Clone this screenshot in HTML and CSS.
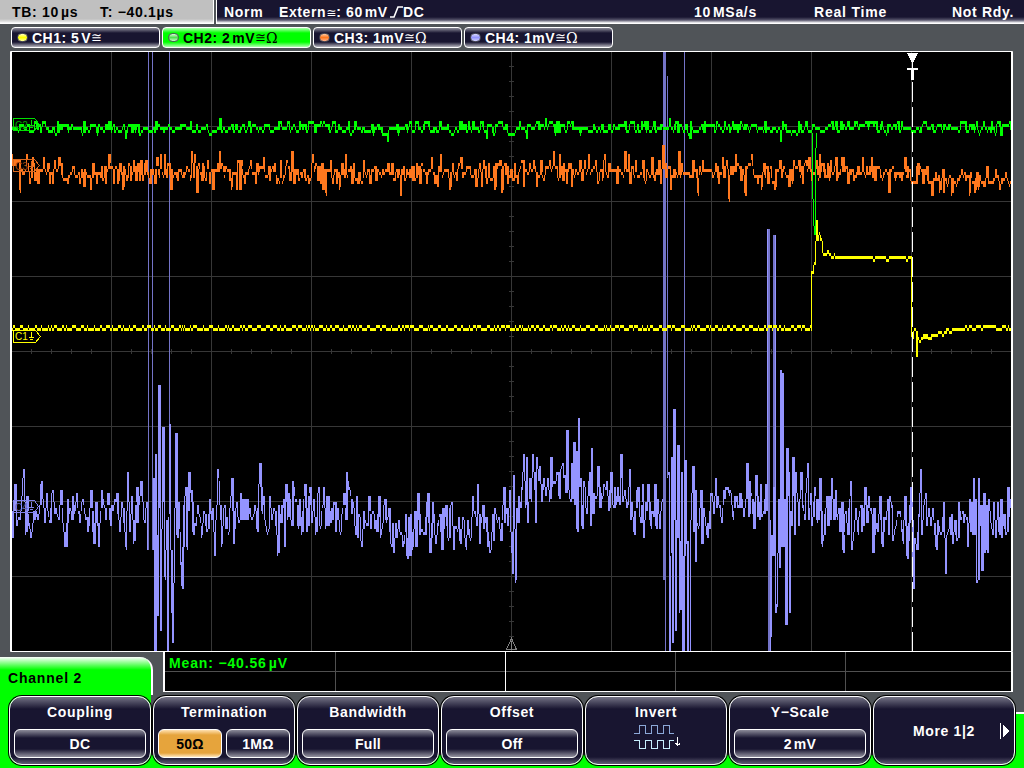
FILE: index.html
```html
<!DOCTYPE html>
<html lang="en">
<head>
    <meta charset="UTF-8">
    <meta name="viewport" content="width=device-width, initial-scale=1.0">
    <title>Oscilloscope</title>
    <link rel="stylesheet" href="styles.css">
</head>
<body>
    <header class="status-bar">
        <div class="timebase">
            <span class="tb">TB: 10<i class="thin"></i>µs</span>
            <span>T: −40.1µs</span>
        </div>
        <div class="trigger">
            <span class="mode">Norm</span>
            <span class="source">Extern<i class="sym">≅</i>: 60<i class="thin"></i>mV</span>
            <svg class="edge" width="13" height="12"><path d="M0 11h4L8 1h5" /></svg>
            <span class="coupling">DC</span>
            <span class="rate">10<i class="thin"></i>MSa/s</span>
            <span class="acq">Real Time</span>
            <span class="state">Not Rdy.</span>
        </div>
    </header>

    <nav class="channels">
        <div class="channel ch1"><i class="led"></i><span>CH1: 5<i class="thin"></i>V</span><i class="sym">≅</i></div>
        <div class="channel ch2 active"><i class="led"></i><span>CH2: 2<i class="thin"></i>mV</span><i class="sym">≅</i><i class="ohm">Ω</i></div>
        <div class="channel ch3"><i class="led"></i><span>CH3: 1mV</span><i class="sym">≅</i><i class="ohm">Ω</i></div>
        <div class="channel ch4"><i class="led"></i><span>CH4: 1mV</span><i class="sym">≅</i><i class="ohm">Ω</i></div>
    </nav>

    <main class="screen">
        <svg id="scope" width="999" height="599" viewBox="12 52 999 599" shape-rendering="crispEdges">
            <path id="grid" />
            <path id="trace4" />
            <path id="spikes4" />
            <path id="trace3" />
            <path id="trace2" />
            <path id="trace1" />
            <g class="markers">
                <path class="m4" d="M13.5 500.5h21l4 6-4 6h-21z" />
                <path class="m3" d="M13.5 159.5h21l5 6-5 6h-21z" />
                <path class="m2" d="M13.5 118.5h21l5 6-5 6h-21z" />
                <path class="m1" d="M13.5 330.5h22l5 6-5 6h-22z" />
                <text class="m4t" x="15" y="511">C4</text>
                <text class="m3t" x="15" y="170">C3</text>
                <text class="m2t" x="15" y="129">C2</text>
                <text class="m1t" x="15" y="340">C1</text>
                <path class="m4" d="M31.500 502v5M29 507.500h5M30 509.500h3" />
                <path class="m3" d="M31.500 161v5M29 166.500h5M30 168.500h3" />
                <path class="m2" d="M31.500 120v5M29 125.500h5M30 127.500h3" />
                <path class="m1" d="M31.500 332v5M29 337.500h5M30 339.500h3" />
            </g>
            <path class="ref" d="M511.500 638.500l-5 11h10zM511.500 641v8" />
            <path class="cursor" d="M912.500 82V651" />
            <path class="flag" d="M907 53h11l-5 10h-1zM907 68h11v2h-4v10h-3v-10h-4zM912 63h1v5h-1z" />
        </svg>
    </main>

    <section class="lower">
        <h2 class="menu-title">Channel 2</h2>
        <div class="results">
            <div class="cell mean">Mean: −40.56<i class="thin"></i>µV</div>
            <div class="cell white"></div>
            <div class="cell"></div>
            <div class="cell"></div>
            <div class="cell last"></div>
        </div>
    </section>

    <footer class="menu">
        <div class="softkey"><span>Coupling</span><div class="values"><b>DC</b></div></div>
        <div class="softkey"><span>Termination</span><div class="values"><b class="on">50Ω</b><b>1MΩ</b></div></div>
        <div class="softkey"><span>Bandwidth</span><div class="values"><b>Full</b></div></div>
        <div class="softkey"><span>Offset</span><div class="values"><b>Off</b></div></div>
        <div class="softkey">
            <span>Invert</span>
            <svg class="wave" width="48" height="26" shape-rendering="crispEdges">
                <path class="up" d="M0 8.500h5.500v-8h6v8h6v-8h6v8h6v-8h6v8h4" />
                <path class="down" d="M0 15.500h5.500v8h6v-8h6v8h6v-8h6v8h6v-8h4" />
                <path class="arrow" d="M43.500 12v9M41 18.500h1v1h3v-1h1" />
            </svg>
        </div>
        <div class="softkey"><span>Y−Scale</span><div class="values"><b>2<i class="thin"></i>mV</b></div></div>
        <div class="softkey more">
            <span>More 1|2</span>
            <svg width="10" height="16" shape-rendering="crispEdges"><path d="M0 0h1v16H0zM3 2l6 6-6 6z" /></svg>
        </div>
    </footer>

    <script src="script.js"></script>
</body>
</html>
```

FILE: styles.css
```css
body {
    font-family: "Liberation Sans", Arial, sans-serif;
    font-size: 14px;
    font-weight: bold;
    letter-spacing: 0.7px;
    color: #fff;
    background-color: #505458;
    width: 1024px;
    height: 768px;
    margin: 0;
    overflow: hidden;
    display: flex;
    flex-direction: column;
}

* {
    box-sizing: border-box;
}

i {
    font-style: normal;
}

span, b {
    white-space: pre;
}

.thin {
    display: inline-block;
    width: 2px;
}

.sym, .ohm {
    font-family: "DejaVu Sans", sans-serif;
    font-weight: normal;
    font-size: 12px;
    letter-spacing: 0;
}

.channel .sym {
    font-size: 13px;
}

.ohm {
    font-family: "DejaVu Serif", serif;
    font-size: 14px;
}

/* status line */
.status-bar {
    display: flex;
    height: 24px;
    gap: 2px;
    flex: none;
    line-height: 24px;
}

.timebase {
    width: 214px;
    padding-left: 12px;
    display: flex;
    color: #000;
    background: linear-gradient(#c0c0c0 19px, #e8e8e8 22px, #fff 23px);
    border-right: 1px solid #fff;
}

.tb {
    width: 88px;
}

.trigger {
    flex: 1;
    display: flex;
    background: linear-gradient(#181530 17px, #55536a 20px, #fff 23px);
    border-left: 1px solid #fff;
    padding-left: 7px;
}

.mode {
    width: 55px;
}

.source {
    width: 111px;
    letter-spacing: 0.6px;
}

.edge {
    margin-top: 6px;
    fill: none;
    stroke: #fff;
    stroke-width: 1.6;
}

.coupling {
    width: 291px;
}

.rate {
    width: 120px;
    letter-spacing: 0.7px;
}

.acq {
    width: 138px;
    letter-spacing: 0.8px;
}

/* channel tabs */
.channels {
    display: flex;
    gap: 2px;
    height: 27px;
    padding: 3px 0 0 11px;
    flex: none;
}

.channel {
    width: 149px;
    height: 21px;
    display: flex;
    align-items: center;
    padding-left: 5px;
    border: 1px solid #fff;
    border-radius: 4px;
    background: linear-gradient(#8c8b99, #181530 5px, #181530 14px, #b5b4be 19px);
}

.channel span {
    letter-spacing: 0.5px;
}

.active {
    color: #000;
    background: linear-gradient(#b0ffb0, #00ff00 5px, #00ff00 14px, #b0ffb0 19px);
}

.led {
    width: 11px;
    height: 9px;
    border-radius: 5px;
    border: 1px solid #50505c;
    margin-right: 4px;
}

.ch1 .led {
    background: linear-gradient(#ffffc0, #ffff00 50%, #ffffa0);
}

.ch2 .led {
    background: linear-gradient(#d8ffd8, #50e050 50%, #c8ffc8);
}

.ch3 .led {
    background: linear-gradient(#ffc8a0, #ff7820 50%, #ffb088);
}

.ch4 .led {
    background: linear-gradient(#d8d8ff, #9494ff 50%, #d0d0ff);
}

/* waveform display */
.screen {
    flex: none;
    margin-left: 10px;
    width: 1003px;
    height: 601px;
    background-color: #000;
    border: solid #fff;
    border-width: 1px 2px;
    border-radius: 1px;
}

.screen svg {
    display: block;
}

#grid {
    fill: #373737;
}

#trace1 {
    fill: #ffff00;
}

#trace2 {
    fill: #00ff00;
}

#trace3 {
    fill: #ff781e;
}

#trace4 {
    fill: #9494ff;
}

#spikes4 {
    fill: #7474c8;
}

.markers path {
    fill: none;
}

.markers text {
    font-size: 10px;
    font-weight: normal;
    letter-spacing: 0;
}

.m1 { stroke: #ffff00; }
.m2 { stroke: #00e000; }
.m3 { stroke: #d86820; }
.m4 { stroke: #8080e8; }
.m1t { fill: #ffff00; }
.m2t { fill: #00a000; }
.m3t { fill: #a04810; }
.m4t { fill: #6060b0; }

.ref {
    fill: none;
    stroke: #808080;
}

.cursor {
    stroke: #fff;
    stroke-dasharray: 20 5;
}

.flag {
    fill: #fff;
}

/* measurement results next to the menu title */
.lower {
    display: flex;
    height: 43px;
    flex: none;
}

.menu-title {
    width: 153px;
    height: 38px;
    margin: 5px 10px 0 0;
    padding: 12px 0 0 8px;
    font-size: 14px;
    line-height: 18px;
    letter-spacing: 0.8px;
    color: #000;
    background: linear-gradient(#fff, #00ff00 13px);
    border-right: 2px solid #fff;
    border-radius: 0 13px 0 0;
}

.results {
    width: 850px;
    height: 40px;
    display: grid;
    grid-template-columns: 171px 170px 170px 170px 165px;
    background: linear-gradient(transparent 19px, #505050 19px, #505050 20px, transparent 20px) #000;
    border: solid #fff;
    border-width: 0 2px 1px;
}

.cell {
    border-right: 1px solid #505050;
}

.cell.white {
    border-color: #fff;
}

.cell.last {
    border: 0;
}

.mean {
    color: #00ff00;
    padding-left: 4px;
    line-height: 22px;
    letter-spacing: 0.85px;
    white-space: nowrap;
}

/* softkeys */
.menu {
    flex: 1;
    display: flex;
    gap: 2px;
    padding: 1px 0 0 9px;
    background:
        linear-gradient(#00ff00, #00ff00) 0 0 / 151px 73px no-repeat,
        linear-gradient(#00ff00, #00ff00) 0 60px / 1024px 13px no-repeat,
        linear-gradient(#fff 2px, #00ff00 2px) 1007px 17px / 17px 56px no-repeat;
}

.softkey {
    width: 142px;
    height: 69px;
    padding: 7px 4px 0;
    border: 1px solid #fff;
    border-radius: 13px;
    box-shadow: 0 0 0 1px #000;
    background: linear-gradient(#747385, #181530 12px, #181530 60px, #625f76);
    text-align: center;
}

.softkey > span {
    display: block;
    line-height: 16px;
    letter-spacing: 0.65px;
}

.values {
    display: flex;
    gap: 4px;
    margin-top: 9px;
}

.values b {
    flex: 1;
    height: 29px;
    line-height: 29px;
    letter-spacing: 0.3px;
    border: 1px solid #fff;
    border-radius: 6px;
    background: linear-gradient(#8c8b99, #181530 8px, #181530 19px, #9493a0);
}

.values .on {
    color: #000;
    background: linear-gradient(#ffe0b0, #e6a43c 5px, #e6a43c 23px, #ffe8c0);
}

.wave {
    display: block;
    margin: 5px 0 0 44px;
    fill: none;
}

.up { stroke: #8ca8d8; }
.down { stroke: #c8f0ff; }
.arrow { stroke: #fff; }

.more {
    display: flex;
    align-items: center;
    justify-content: flex-end;
    gap: 25px;
    padding: 0 4px 0 0;
}

.more svg {
    fill: #fff;
}
```

FILE: script.js
```javascript
// samples as "x y" pairs, screen coordinates
const ch4 = `12 538 15 484 17 525 20 519 24 469 26 532 27 496 31 538 34 510 38 519 42 481 45 522 47 493 50 522 52 493 56 507 59 518 61 490 63 522 66 544 68 499 72 519 73 495 75 510 77 493 80 522 82 502 86 519 89 525 91 490 94 544 96 502 99 544 102 490 106 519 108 493 110 519 113 510 117 493 120 532 122 502 126 547 128 472 130 532 132 496 134 541 137 487 138 522 141 481 144 519 147 502 148 550
153 550 154 478 155 651 156 454 158 616 159 385 161 628 163 427 165 577 167 520 168 651 169 515 170 424 171 550 172 613 173 643 174 583 176 433 177 535 179 502 182 586 184 505 186 487 187 547 189 472 192 502 193 532 196 525 198 505 202 535 204 511 208 527 210 499 212 519 213 507 215 556 218 469 222 544 224 508 229 532 232 478 234 541 237 502 240 520 241 493 242 519 243 499 244 519 245 499 246 519 247 499 248 516 250 507 256 510 257 529 259 484
260 463 262 511 264 496 265 519 267 532 269 528 270 496 272 519 274 508 278 553 279 505 281 522 284 499 285 547 286 484 288 517 289 493 292 526 293 481 296 499 299 526 300 499 302 532 305 484 307 532 310 487 312 522 314 499 316 532 319 487 320 526 324 487 326 526 327 496 328 526 329 496 331 522 335 502 336 532 338 508 340 532 344 493 346 519 347 472 349 487 352 511 353 502 356 535 357 496 358 538 359 514 362 547 364 511 368 526 369 496 371 528 374 514 377 532 379 496 381 535 384 505 388 517 389 508 392 547 393 523 394 553 396 523 397 538 399 520 403 547 406 514 407 556 409 517 410 556 411 514 413 547 415 511 416 547 418 493 420 532 424 535 428 493 430 550 433 502 436 544 440 514 442 550 443 508 444 528 446 505 449 538 450 508 452 502 454 550 455 526 459 517 460 541 463 517 466 547 468 520 471 538 473 496 476 517 477 526 478 484 480 541 483 505 484 528 486 517 488 544 491 550 493 514 494 541 495 508 497 519 499 517 501 538 504 487 505 522 507 508 508 526 510 490
511 532 512 553 513 574 514 475 516 580 517 508 518 522 519 496 521 508 522 487 524 454 526 505 527 457 528 522 530 478 531 499 533 454 535 487 536 522 537 457 539 481 540 466 542 502 544 478 546 493 548 478 550 499 551 457 552 487 554 481 558 472 559 496 561 469 563 463 566 493 567 430 568 487 571 502 572 463 573 499 574 442 575 505 576 451 577 529 579 418 580 487 581 478 582 526 584 481 587 514 590 472 591 526 592 448 593 514 594 493 597 496 598 466 600 505 604 484 606 490 607 481 609 508 611 472 614 508 615 487 617 502 618 487 620 505 621 454 623 502 625 490 628 502 630 469 631 519 632 502 634 532 637 490 638 487 641 522 643 484 644 538 646 502 647 511 648 484 650 519 654 517 655 484 656 526 658 499 660 526 663 499
667 477 669 472 670 651 672 457 673 643 674 409 676 631 678 445 680 610 682 472 683 651 685 460 687 541 688 651 690 651 691 520 693 466 694 532 695 490 696 562 697 523 699 526 701 490 702 544 704 508 706 526 709 528 711 493 714 514 716 478 717 508 718 496 722 522 724 490 728 487 731 493 733 517 736 499 742 499 744 514 746 499 747 463 749 514 750 481 754 529 756 475 758 517
759 502 760 519 761 484 762 517 764 511 766 484 767 511 768 229 769 520 770 651 771 637 772 535 773 556 774 235 775 487 776 613 777 604 779 499 780 568 781 370 782 548 783 373 784 546 785 499 786 625 787 448 789 493 790 613 791 511 792 526 793 457 795 532 796 472 799 526 801 472 803 505 805 519 808 463 809 519 811 493 812 526 815 487 818 519 820 478 822 544 824 535 827 496 828 526 830 496 831 519 832 478 834 517 836 490 837 517 839 508 840 532 842 502 843 550 846 511 848 535 851 481 852 550 854 532 856 508 858 532 861 505 862 532 865 487 867 522 869 496 872 514 873 553 874 508 875 532 877 523 878 532 880 496 882 544 884 517 888 499 889 535 890 496 892 505 893 541 895 528 898 511 900 511 903 541 905 496 907 556 909 523 911 487 912 520 913 559 914 589 915 538 917 547 919 514 921 469 922 535 924 505 926 493 927 526 929 508 931 526 933 508 936 547 938 520 942 532 944 502 946 574 947 535 950 517 951 535 952 514 953 544 955 520 958 538 959 502 961 519 963 511 967 517 968 547 970 499 971 532 972 502 973 535 974 478 975 535 976 499 977 583 978 580 979 478 980 526 981 505 982 571 984 493 985 553 986 505 987 550 989 499 991 522 993 535 994 502 996 535 998 502 999 532 1001 499 1002 538 1004 514 1007 532 1008 487 1009 514 1011 499`;

const ch3 = `12 154 15 167 20 190 22 167 27 154 30 183 33 157 35 180 38 183 40 167 44 157 50 183 53 181 55 160 59 157 61 163 62 175 68 183 73 166 80 183 82 167 84 187 90 175 91 190 93 163 97 183 102 166 103 180 105 166 106 183 109 154 114 183 117 168 118 183 120 163 123 187 125 167 127 180 129 162 131 180 133 173 134 160 136 180 138 162 140 180 141 160 143 180 146 160 150 183 153 168 155 183 157 157 161 154 163 173 165 154 170 173 171 187 175 172 178 180 180 172 182 175 187 166 190 173 192 151 195 154 197 190 199 163 202 180 203 163 208 160 210 183 213 190 216 167 220 151 222 163 226 166 229 167 232 187 234 172 237 190 240 190 242 167 245 183 250 166 256 183 259 172 264 157 270 180 275 163 277 183 281 160 283 180 287 160 290 180 292 151 294 183 296 167 299 180 304 168 308 173 309 183 313 154 316 163 318 180 321 183 323 190 326 193 328 167 331 160 333 183 335 167 337 183 340 187
342 163 346 154 348 173 352 183 353 167 358 183 364 160 370 185 372 167 376 180 378 167 383 167 388 163 392 163 395 180 397 167 401 196 405 180 407 167 410 167 413 180 417 163 420 183 423 167 427 183 432 157 435 183 438 187 441 154 445 167 450 187 453 163 457 180 461 157 466 173 470 166 476 187 479 167 482 187 484 160 487 183 489 163 491 177 495 187 500 160 502 190 505 163 508 183 511 167 514 180 518 183 520 167 524 187 530 163 534 160 537 187 541 160 545 173 550 160 554 151 558 177 560 153 563 180 567 183 570 167 572 187 576 167 582 180 585 160 589 154 592 167 596 160 598 183 602 167 605 154 608 177 612 167 617 183 620 167 625 151 629 153 630 183 636 160 639 173 643 160 647 167 652 157 655 180 659 160 661 183 663 145 665 163 668 167 671 190 674 167 679 151
682 162 687 172 693 160 698 193 703 160 711 168 713 177 716 162 719 183 723 157 729 199 732 172 736 154 741 180 745 193 749 163 752 154 758 183 762 187 764 163 768 183 771 166 775 187 780 160 784 166 789 187 794 160 799 160 803 183 805 163 809 157 812 180 816 158 820 154 825 177 831 160 836 157 837 180 842 157 844 157 848 183 852 167 856 177 863 157 868 172 872 157 875 180 880 167 889 190 892 167 895 177 900 177 905 157 910 167 916 183 920 166 923 183 927 166 932 193 936 170 940 190 943 169 944 193 950 175 952 193 958 177 962 169 965 172 970 193 975 190 980 175 984 187 987 166 993 183 996 169 1000 190 1003 177 1006 172 1011 180`;

const ch2Peaks = { 126: 138, 220: 116, 309: 119, 349: 119, 388: 141, 417: 119, 487: 138, 499: 119, 527: 138, 546: 116, 645: 119, 670: 116, 690: 138, 717: 119, 741: 119, 781: 141, 783: 119, 882: 119, 924: 119, 977: 119, 984: 119, 1001: 135, 1010: 119 };

let seed = 7;
function rand() {
    seed = (seed * 16807) % 2147483647;
    return seed / 2147483647;
}

function parse(text, jitter) {
    const n = text.trim().split(/\s+/).map(Number);
    const y = {};
    for (let i = 0; i + 3 < n.length; i += 2) {
        const [x0, y0, x1, y1] = n.slice(i, i + 4);
        for (let x = x0; x <= x1; x++) {
            const inner = x > x0 && x < x1 && x1 - x0 > 2;
            y[x] = y0 + (y1 - y0) * (x - x0) / (x1 - x0) + (inner ? (rand() - 0.5) * jitter : 0);
        }
    }
    return y;
}

// peaks stand out of a noisy baseline
function noisy(text, base, spread) {
    const n = text.trim().split(/\s+/).map(Number);
    const y = {};
    let v = base(12);
    for (let x = 12; x <= 1011; x++) {
        if (rand() < 0.65) v = base(x) + (rand() + rand() - 1) * spread;
        y[x] = v;
    }
    for (let i = 0; i < n.length; i += 2) y[n[i]] = n[i + 1];
    return y;
}

// one column per pixel, spanning this sample and the next
function columns(y, wide = 1000) {
    let d = '';
    for (let x = 12; x < 1011; x++) {
        const a = y[x];
        const b = y[x + 1] === undefined ? a : y[x + 1];
        const top = Math.round(Math.min(a, b) / 3) * 3 + 1;
        const h = Math.max(3, Math.round(Math.abs(a - b) / 3) * 3);
        const w = Math.abs(a - b) > wide && rand() < 0.5 && x < 1010 ? 2 : 1;
        d += `M${x} ${top}h${w}v${h}h${-w}z`;
    }
    return d;
}

function bar(x, y1, y2, w = 1) {
    return `M${x} ${y1}h${w}V${y2}h${-w}z`;
}

// graticule
let grid = '';
for (let x = 111; x < 1000; x += 100) grid += bar(x, 52, 651);
for (let y = 126; y < 600; y += 75) grid += `M12 ${y}h999v1H12z`;
for (let x = 31; x < 1011; x += 20) grid += bar(x, 349, 354);
for (let y = 66; y < 650; y += 15) grid += `M509 ${y}h5v1h-5z`;
document.getElementById('grid').setAttribute('d', grid);

const y4 = parse(ch4, 20);
for (let x = 149; x < 153; x++) y4[x] = undefined;
for (let x = 664; x < 667; x++) y4[x] = undefined;
for (const x in y4) if (y4[x] === undefined) y4[x] = -20;
y4[148] = 550;
let d4 = columns(y4, 12);
// blank the fast transitions, they are drawn dimmer below
d4 = d4.split('z').filter(s => !/ -\d/.test(s)).join('z');
document.getElementById('trace4').setAttribute('d', d4);
document.getElementById('spikes4').setAttribute('d',
    bar(148, 52, 550) + bar(152, 52, 550) + bar(169, 52, 424) +
    bar(663, 52, 580) + bar(664, 52, 580) + bar(665, 52, 651) + bar(667, 76, 477) +
    bar(684, 52, 460) + bar(768, 229, 651, 2) + bar(773, 235, 487, 2));

document.getElementById('trace3').setAttribute('d',
    columns(noisy(ch3, x => x > 925 ? 178 : 170, 11), 7));

const y2 = {};
let v = 126;
for (let x = 12; x <= 1011; x++) {
    if (rand() < 0.6) v = [120, 123, 126, 126, 129, 129, 132, 123, 126, 129][Math.floor(rand() * 10)];
    y2[x] = ch2Peaks[x] || v;
}
document.getElementById('trace2').setAttribute('d', columns(y2, 4) +
    bar(812, 133, 199) + bar(813, 199, 226) + bar(814, 226, 235, 2) + bar(815, 148, 235) + bar(816, 133, 148));

// channel 1 is a flat line toggling one step, then the pulse
let d1 = '';
let low = true;
for (let x = 12; x < 811;) {
    const w = Math.min(811 - x, 1 + Math.floor(rand() * (low ? 6 : 4)));
    d1 += bar(x, low ? 328 : 325, low ? 331 : 328, w);
    low = !low;
    x += w;
}
d1 += bar(811, 271, 331) + bar(812, 271, 274, 2) + bar(813, 265, 273) + bar(814, 262, 265, 2) +
    bar(815, 241, 265) + bar(816, 220, 241, 2) + bar(818, 235, 241) + bar(819, 232, 235) +
    bar(820, 235, 241) + bar(821, 238, 241) + bar(822, 241, 253) + bar(823, 253, 256, 4) +
    bar(827, 250, 254, 2) + bar(829, 253, 256, 2) + bar(831, 256, 259, 3) + bar(834, 253, 256) +
    bar(835, 256, 259, 38) + bar(873, 259, 262, 2) + bar(875, 256, 259, 11) + bar(886, 259, 262, 3) +
    bar(889, 256, 259, 17) + bar(906, 259, 262, 2) + bar(908, 256, 259, 4) + bar(911, 256, 337) +
    bar(913, 331, 339) + bar(914, 328, 331, 2) + bar(916, 331, 357, 2) + bar(918, 337, 340) +
    bar(919, 340, 343, 2) + bar(921, 337, 340, 2) + bar(923, 334, 339, 5) + bar(928, 337, 340, 4) +
    bar(931, 334, 337, 7) + bar(938, 331, 334, 4) + bar(942, 334, 337, 2) + bar(944, 331, 334, 3) +
    bar(946, 328, 331, 3) + bar(949, 331, 334, 3) + bar(952, 328, 331, 13) + bar(965, 325, 328, 2) +
    bar(967, 328, 331, 2) + bar(969, 325, 328, 3) + bar(972, 328, 331, 4) + bar(976, 325, 328, 5) +
    bar(981, 328, 331, 2) + bar(983, 325, 328, 13) + bar(996, 328, 331, 6) + bar(1002, 325, 328, 4) +
    bar(1006, 328, 331, 2) + bar(1008, 325, 328) + bar(1009, 328, 331, 2);
document.getElementById('trace1').setAttribute('d', d1);
```
